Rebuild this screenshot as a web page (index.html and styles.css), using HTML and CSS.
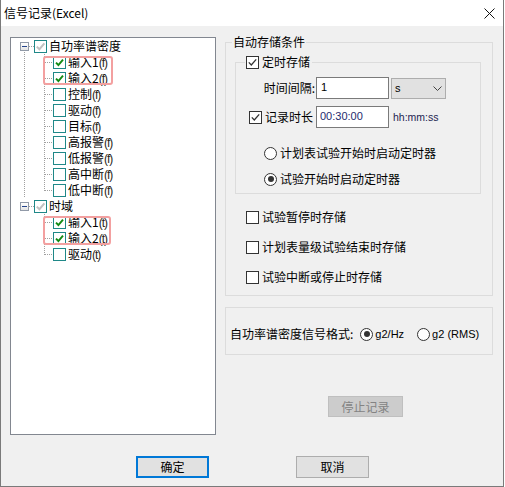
FILE: index.html
```html
<!DOCTYPE html>
<html lang="zh-CN">
<head>
    <meta charset="UTF-8">
    <title>信号记录(Excel)</title>
    <link rel="stylesheet" href="styles.css">
</head>
<body>

    <div class="window">
        <div class="titlebar">
            <span class="title">信号记录(Excel)</span>
            <span class="close">
                <svg width="11" height="11" viewBox="0 0 11 11"><path d="M0.5 0.5 10.5 10.5 M10.5 0.5 0.5 10.5" stroke="#111" stroke-width="1" fill="none"/></svg>
            </span>
        </div>

        <div class="content">
            <div class="main">
                <!-- 신호 트리 -->
                <div class="tree">
                    <div class="node open">
                        <div class="row root">
                            <span class="exp"></span><span class="hdots"></span>
                            <span class="tcb"><svg width="11" height="11" viewBox="0 0 11 11"><path d="M1.8 5.6 4.4 8.2 9.4 2.4" fill="none" stroke="#c2c2c2" stroke-width="2"/></svg></span>
                            <span class="tlabel">自功率谱密度</span>
                        </div>
                        <div class="hl hl-f">
                            <div class="row child"><span class="branch"></span><span class="tcb"><svg width="11" height="11" viewBox="0 0 11 11"><path d="M2 5.6 4.4 8 9 2.6" fill="none" stroke="#128a12" stroke-width="1.9"/></svg></span><span class="tlabel">输入1<i>(f)</i></span></div>
                            <div class="row child"><span class="branch"></span><span class="tcb"><svg width="11" height="11" viewBox="0 0 11 11"><path d="M2 5.6 4.4 8 9 2.6" fill="none" stroke="#128a12" stroke-width="1.9"/></svg></span><span class="tlabel">输入2<i>(f)</i></span></div>
                        </div>
                        <div class="row child"><span class="branch"></span><span class="tcb"></span><span class="tlabel">控制<i>(f)</i></span></div>
                        <div class="row child"><span class="branch"></span><span class="tcb"></span><span class="tlabel">驱动<i>(f)</i></span></div>
                        <div class="row child"><span class="branch"></span><span class="tcb"></span><span class="tlabel">目标<i>(f)</i></span></div>
                        <div class="row child"><span class="branch"></span><span class="tcb"></span><span class="tlabel">高报警<i>(f)</i></span></div>
                        <div class="row child"><span class="branch"></span><span class="tcb"></span><span class="tlabel">低报警<i>(f)</i></span></div>
                        <div class="row child"><span class="branch"></span><span class="tcb"></span><span class="tlabel">高中断<i>(f)</i></span></div>
                        <div class="row child last"><span class="branch"></span><span class="tcb"></span><span class="tlabel">低中断<i>(f)</i></span></div>
                    </div>
                    <div class="node">
                        <div class="row root">
                            <span class="exp"></span><span class="hdots"></span>
                            <span class="tcb"><svg width="11" height="11" viewBox="0 0 11 11"><path d="M1.8 5.6 4.4 8.2 9.4 2.4" fill="none" stroke="#c2c2c2" stroke-width="2"/></svg></span>
                            <span class="tlabel">时域</span>
                        </div>
                        <div class="hl hl-t">
                            <div class="row child"><span class="branch"></span><span class="tcb"><svg width="11" height="11" viewBox="0 0 11 11"><path d="M2 5.6 4.4 8 9 2.6" fill="none" stroke="#128a12" stroke-width="1.9"/></svg></span><span class="tlabel">输入1<i>(t)</i></span></div>
                            <div class="row child"><span class="branch"></span><span class="tcb"><svg width="11" height="11" viewBox="0 0 11 11"><path d="M2 5.6 4.4 8 9 2.6" fill="none" stroke="#128a12" stroke-width="1.9"/></svg></span><span class="tlabel">输入2<i>(t)</i></span></div>
                        </div>
                        <div class="row child last"><span class="branch"></span><span class="tcb"></span><span class="tlabel">驱动<i>(t)</i></span></div>
                    </div>
                </div>

                <div class="side">
                    <fieldset class="group">
                        <legend>自动存储条件</legend>

                        <fieldset class="timer">
                            <legend><span class="line"><span class="cb"><svg width="11" height="11" viewBox="0 0 11 11"><path d="M1.8 5.4 4.3 8 9.2 2.4" fill="none" stroke="#333" stroke-width="1.3"/></svg></span><span class="txt">定时存储</span></span></legend>

                            <div class="fields">
                                <span class="flabel f1">时间间隔:</span>
                                <span class="input">1</span>
                                <span class="select">s<svg width="9" height="5" viewBox="0 0 9 5"><path d="M0.5 0.5 4.5 4.5 8.5 0.5" fill="none" stroke="#444" stroke-width="1"/></svg></span>

                                <span class="flabel f2"><span class="cb"><svg width="11" height="11" viewBox="0 0 11 11"><path d="M1.8 5.4 4.3 8 9.2 2.4" fill="none" stroke="#333" stroke-width="1.3"/></svg></span><span class="txt">记录时长</span></span>
                                <span class="input time">00:30:00</span>
                                <span class="unit">hh:mm:ss</span>
                            </div>

                            <div class="line radio first"><span class="rb"></span><span class="txt">计划表试验开始时启动定时器</span></div>
                            <div class="line radio"><span class="rb on"></span><span class="txt">试验开始时启动定时器</span></div>
                        </fieldset>

                        <div class="line check first"><span class="cb"></span><span class="txt">试验暂停时存储</span></div>
                        <div class="line check"><span class="cb"></span><span class="txt">计划表量级试验结束时存储</span></div>
                        <div class="line check"><span class="cb"></span><span class="txt">试验中断或停止时存储</span></div>
                    </fieldset>

                    <div class="format">
                        <div class="line">
                            <span class="txt">自功率谱密度信号格式:</span>
                            <span class="rb on fmt1"></span><span class="latin">g2/Hz</span>
                            <span class="rb fmt2"></span><span class="latin">g2 (RMS)</span>
                        </div>
                    </div>

                    <button class="btn stop" disabled>停止记录</button>
                </div>
            </div>

            <div class="actions">
                <button class="btn primary">确定</button>
                <button class="btn">取消</button>
            </div>
        </div>
    </div>

</body>
</html>
```

FILE: styles.css
```css
body{
    margin: 0;
    background: #fff;
    font-family: "Noto Sans CJK SC", "Liberation Sans", sans-serif;
    font-size: 12px;
    color: #000;
}

.window{
    width: 504px;
    height: 487px;
    box-sizing: border-box;
    border: 1px solid #7a7a7a;
    border-top: 0;
    background: #f0f0f0;
    display: flex;
    flex-direction: column;
}

.titlebar{
    height: 26px;
    flex: none;
    background: #fff;
    display: flex;
    align-items: center;
    justify-content: space-between;
    padding: 0 8px 0 3px;
}
.title{
    line-height: 16px;
}
.close svg{
    display: block;
}

.content{
    flex: 1;
}
.main{
    display: flex;
    align-items: flex-start;
    padding: 8px 0 0 9px;
    height: 401px;
}

/* 트리 */
.tree{
    width: 206px;
    height: 398px;
    box-sizing: border-box;
    margin-top: 3px;
    border: 1px solid #828790;
    background: #fff;
}
.row{
    display: flex;
    align-items: center;
    height: 16px;
    line-height: 16px;
    white-space: nowrap;
}
.root{
    padding-left: 9px;
}
.child{
    padding-left: 33px;
}
.node.open{
    background: repeating-linear-gradient(to bottom, #a0a0a0 0 1px, transparent 1px 2px) 13px 12px / 1px calc(100% - 12px) no-repeat;
}
.exp{
    width: 9px;
    height: 9px;
    box-sizing: border-box;
    flex: none;
    border: 1px solid #919aa8;
    background: linear-gradient(#23448c, #23448c) center / 5px 1px no-repeat, linear-gradient(#fff, #e4e4e4);
}
.hdots{
    width: 5px;
    height: 1px;
    flex: none;
    background: repeating-linear-gradient(to right, #a0a0a0 0 1px, transparent 1px 2px);
}
.branch{
    width: 9px;
    height: 16px;
    flex: none;
    background:
        repeating-linear-gradient(to bottom, #a0a0a0 0 1px, transparent 1px 2px) 0 0 / 1px 100% no-repeat,
        repeating-linear-gradient(to right, #a0a0a0 0 1px, transparent 1px 2px) 1px 8px / 100% 1px no-repeat;
}
.last .branch{
    background-size: 1px 9px, 100% 1px;
}
.tcb{
    width: 13px;
    height: 13px;
    box-sizing: border-box;
    flex: none;
    border: 1px solid #1f8888;
    background: #fff;
}
.tcb svg, .cb svg{
    display: block;
}
.tlabel{
    margin-left: 2px;
}
.tlabel i{
    font-style: normal;
    font-family: "Liberation Sans", sans-serif;
    font-size: 12px;
    letter-spacing: -1px;
    color: #2a2418;
}

/* 빨간 강조 테두리 */
.hl{
    position: relative;
}
.hl::after{
    content: "";
    position: absolute;
    left: 32px;
    top: 2px;
    bottom: 1px;
    border: 2px solid #f3a0a0;
    border-radius: 3px;
}
.hl-f::after{
    width: 66px;
}
.hl-t::after{
    width: 64px;
}

/* 오른쪽 */
.side{
    width: 268px;
    margin-left: 9px;
}
fieldset{
    margin: 0;
    min-width: 0;
    border: 1px solid #dcdcdc;
}
.group{
    padding: 0 11px 10px 9px;
}
.group > legend{
    padding: 0 1px;
    margin-left: -3px;
    line-height: 16px;
}
.timer{
    margin-top: 4px;
    padding: 0 0 6px 0;
}
.timer > legend{
    margin-left: 9px;
    padding: 0 2px 0 1px;
}
.line{
    display: flex;
    align-items: center;
    height: 16px;
    line-height: 16px;
    white-space: nowrap;
}
.cb{
    width: 13px;
    height: 13px;
    box-sizing: border-box;
    flex: none;
    border: 1px solid #333;
    background: #fff;
}
.txt{
    margin-left: 3px;
}
.rb{
    width: 13px;
    height: 13px;
    box-sizing: border-box;
    flex: none;
    border: 1px solid #333;
    border-radius: 50%;
    background: #fff;
    display: flex;
    align-items: center;
    justify-content: center;
}
.rb.on::after{
    content: "";
    width: 6px;
    height: 6px;
    border-radius: 50%;
    background: #333;
}

.fields{
    display: grid;
    grid-template-columns: 80px 73px auto;
    row-gap: 7px;
    align-items: center;
    margin-top: 7px;
}
.flabel{
    justify-self: end;
    display: flex;
    align-items: center;
    line-height: 16px;
}
.f1{
    padding-right: 1px;
}
.f2{
    padding-right: 3px;
}
.input{
    height: 22px;
    box-sizing: border-box;
    border: 1px solid #7a7a7a;
    background: #fff;
    padding: 0 4px;
    line-height: 19px;
    font-family: "Liberation Sans", sans-serif;
    font-size: 11px;
}
.input.time{
    padding-left: 3px;
    color: #1e2a6e;
}
.select{
    width: 55px;
    height: 21px;
    box-sizing: border-box;
    margin-left: 2px;
    border: 1px solid #adadad;
    background: #e1e1e1;
    padding: 0 3px 0 3px;
    display: flex;
    align-items: center;
    justify-content: space-between;
    font-family: "Liberation Sans", sans-serif;
    font-size: 11px;
}
.unit{
    margin-left: 4px;
    font-family: "Liberation Sans", sans-serif;
    font-size: 10.5px;
    color: #1c2450;
}
.radio{
    margin-left: 28px;
    margin-top: 10px;
}
.radio.first{
    margin-top: 17px;
}
.check{
    margin: 14px 0 0 11px;
}
.check.first{
    margin-top: 15px;
}

.format{
    margin-top: 11px;
    border: 1px solid #dcdcdc;
    padding: 18px 0 12px 4px;
}
.format .txt{
    margin-left: 0;
}
.latin{
    margin-left: 2px;
    font-family: "Liberation Sans", sans-serif;
    font-size: 11px;
}
.fmt1{
    margin-left: 7px;
}
.fmt2{
    margin-left: 13px;
}

/* 버튼 */
.btn{
    width: 73px;
    height: 22px;
    box-sizing: border-box;
    border: 1px solid #adadad;
    background: #e1e1e1;
    font-family: "Noto Sans CJK SC", sans-serif;
    font-size: 12px;
    color: #000;
    padding: 0;
    line-height: 18px;
}
.btn.primary{
    border: 2px solid #0078d7;
}
.btn.stop{
    display: block;
    width: 75px;
    height: 21px;
    margin: 41px 0 0 103px;
    background: #cccccc;
    border-color: #bfbfbf;
    color: #838383;
}
.actions{
    display: flex;
    gap: 87px;
    padding: 21px 0 0 135px;
}
```
